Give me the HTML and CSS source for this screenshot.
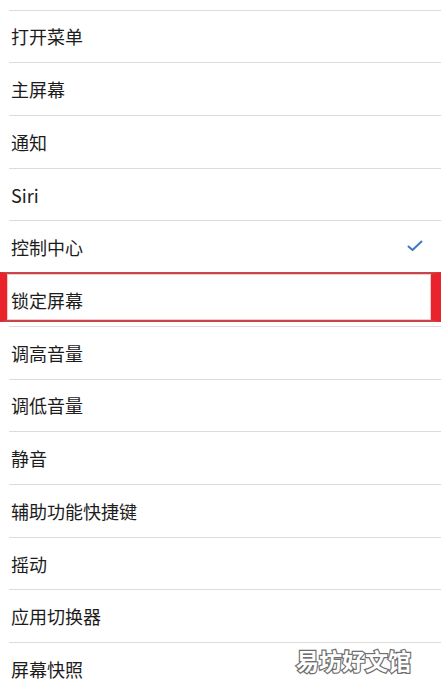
FILE: index.html
```html
<!DOCTYPE html>
<html lang="zh">
<head>
<meta charset="utf-8">
<link rel="stylesheet" href="styles.css">
</head>
<body>
<div class="page">
  <ul class="list">
    <li class="row"><span class="label">打开菜单</span></li>
    <li class="row"><span class="label">主屏幕</span></li>
    <li class="row"><span class="label">通知</span></li>
    <li class="row"><span class="label">Siri</span></li>
    <li class="row"><span class="label">控制中心</span>
      <svg class="check" width="16" height="12" viewBox="0 0 16 12"><polyline points="1.5,6.5 5.5,10 14.5,1.5" fill="none" stroke="#3b78c8" stroke-width="2" stroke-linecap="round" stroke-linejoin="round"/></svg>
    </li>
    <li class="row highlighted"><span class="label">锁定屏幕</span><span class="mark"></span></li>
    <li class="row"><span class="label">调高音量</span></li>
    <li class="row"><span class="label">调低音量</span></li>
    <li class="row"><span class="label">静音</span></li>
    <li class="row"><span class="label">辅助功能快捷键</span></li>
    <li class="row"><span class="label">摇动</span></li>
    <li class="row"><span class="label">应用切换器</span></li>
    <li class="row last"><span class="label">屏幕快照</span><span class="watermark">易坊好文馆</span></li>
  </ul>
</div>
</body>
</html>
```
FILE: styles.css
```css
html, body {
  margin: 0;
  padding: 0;
  background: #ffffff;
}
.page {
  width: 441px;
  height: 692px;
  overflow: hidden;
  padding-top: 9.5px;
  box-sizing: border-box;
  font-family: "Noto Sans CJK SC", "Noto Sans", sans-serif;
}
.list {
  list-style: none;
  margin: 0;
  padding: 0 0 0 9px;
}
.row {
  position: relative;
  height: 52.72px;
  box-sizing: border-box;
  border-top: 1.5px solid #dcdcdc;
  display: flex;
  align-items: center;
  justify-content: space-between;
  padding-right: 18px;
}
.label {
  font-size: 18px;
  color: #1c1c1c;
  padding-left: 2px;
  line-height: 1;
}
.check {
  margin-top: -3px;
}
.mark {
  position: absolute;
  left: -9px;
  top: -2px;
  width: 441px;
  height: 50px;
  box-sizing: border-box;
  border-top: 2px solid #c8464a;
  border-bottom: 2px solid #c8464a;
  border-left: 7px solid #e8232b;
  border-right: 10px solid #e8232b;
  box-shadow: inset 0 0 0 1px #f4c9ca;
}
.watermark {
  position: absolute;
  left: 287px;
  top: 6px;
  font-size: 23px;
  font-weight: 700;
  color: #ffffff;
  -webkit-text-stroke: 2.4px #6e6e6e;
  paint-order: stroke fill;
  line-height: 1;
}
```
